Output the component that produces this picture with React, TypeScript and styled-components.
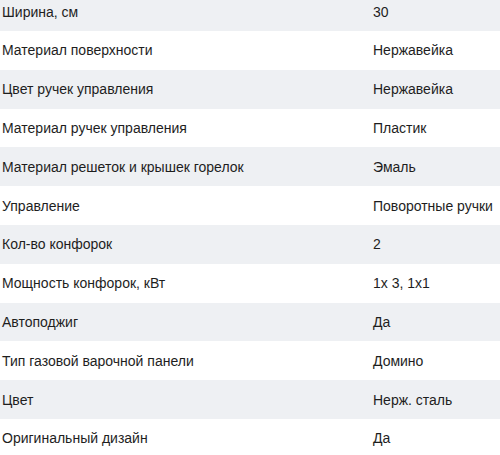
import React from "react";
import styled, { createGlobalStyle } from "styled-components";

const Global = createGlobalStyle`
  html, body { margin: 0; padding: 0; background: #ffffff; overflow: hidden; }
  body { font-family: "Liberation Sans", Arial, sans-serif; }
`;

const Table = styled.div`
  display: flex;
  flex-direction: column;
  margin-top: -7.8px;
  width: 500px;
`;

const Row = styled.div<{ $shaded: boolean }>`
  display: grid;
  grid-template-columns: 371px 1fr;
  align-items: center;
  height: 38.8px;
  background: ${(p) => (p.$shaded ? "#eef0f3" : "#ffffff")};
`;

const Cell = styled.div`
  padding: 0 2px;
  font-size: 14px;
  line-height: 18px;
  color: #1e1e1e;
  white-space: nowrap;
`;

const rows: [string, string][] = [
  ["Ширина, см", "30"],
  ["Материал поверхности", "Нержавейка"],
  ["Цвет ручек управления", "Нержавейка"],
  ["Материал ручек управления", "Пластик"],
  ["Материал решеток и крышек горелок", "Эмаль"],
  ["Управление", "Поворотные ручки"],
  ["Кол-во конфорок", "2"],
  ["Мощность конфорок, кВт", "1х 3, 1х1"],
  ["Автоподжиг", "Да"],
  ["Тип газовой варочной панели", "Домино"],
  ["Цвет", "Нерж. сталь"],
  ["Оригинальный дизайн", "Да"],
];

export default function App() {
  return (
    <>
      <Global />
      <Table>
        {rows.map(([k, v], i) => (
          <Row key={k} $shaded={i % 2 === 0}>
            <Cell>{k}</Cell>
            <Cell>{v}</Cell>
          </Row>
        ))}
      </Table>
    </>
  );
}
